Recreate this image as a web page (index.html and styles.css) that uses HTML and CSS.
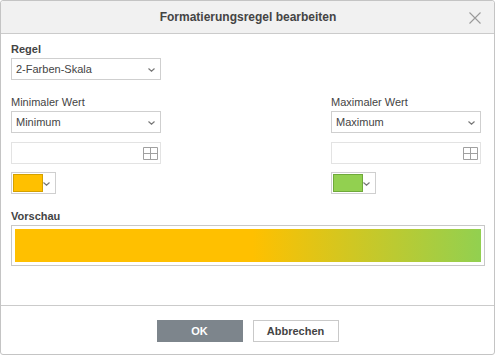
FILE: index.html
```html
<!DOCTYPE html>
<html lang="de">
<head>
<meta charset="utf-8">
<title>Formatierungsregel bearbeiten</title>
<link rel="stylesheet" href="styles.css">
</head>
<body>
<div class="dialog">
  <div class="header">
    <span class="title">Formatierungsregel bearbeiten</span>
    <svg class="close" width="12" height="12" viewBox="0 0 12 12"><path d="M0.5 0.5L11.5 11.5M11.5 0.5L0.5 11.5" stroke="#9a9a9a" stroke-width="1.1" fill="none"/></svg>
  </div>
  <div class="body">
    <div class="label bold">Regel</div>
    <div class="select"><span>2-Farben-Skala</span><svg class="chev" width="7" height="4" viewBox="0 0 7 4"><path d="M0.5 0.5L3.5 3.2L6.5 0.5" stroke="#777" stroke-width="1.2" fill="none"/></svg></div>
    <div class="cols">
      <div class="col">
        <div class="label">Minimaler Wert</div>
        <div class="select"><span>Minimum</span><svg class="chev" width="7" height="4" viewBox="0 0 7 4"><path d="M0.5 0.5L3.5 3.2L6.5 0.5" stroke="#777" stroke-width="1.2" fill="none"/></svg></div>
        <div class="input"><svg class="grid" width="15" height="13" viewBox="0 0 15 13"><path d="M0.5 0.5H14.5V12.5H0.5Z M7.5 0.5V12.5 M0.5 6.5H14.5" stroke="#a0a0a0" stroke-width="1" fill="none"/></svg></div>
        <div class="colorbtn"><span class="swatch orange"></span><svg class="chev" width="7" height="4" viewBox="0 0 7 4"><path d="M0.5 0.5L3.5 3.2L6.5 0.5" stroke="#777" stroke-width="1.2" fill="none"/></svg></div>
      </div>
      <div class="col">
        <div class="label">Maximaler Wert</div>
        <div class="select"><span>Maximum</span><svg class="chev" width="7" height="4" viewBox="0 0 7 4"><path d="M0.5 0.5L3.5 3.2L6.5 0.5" stroke="#777" stroke-width="1.2" fill="none"/></svg></div>
        <div class="input"><svg class="grid" width="15" height="13" viewBox="0 0 15 13"><path d="M0.5 0.5H14.5V12.5H0.5Z M7.5 0.5V12.5 M0.5 6.5H14.5" stroke="#a0a0a0" stroke-width="1" fill="none"/></svg></div>
        <div class="colorbtn"><span class="swatch green"></span><svg class="chev" width="7" height="4" viewBox="0 0 7 4"><path d="M0.5 0.5L3.5 3.2L6.5 0.5" stroke="#777" stroke-width="1.2" fill="none"/></svg></div>
      </div>
    </div>
    <div class="label bold preview-label">Vorschau</div>
    <div class="preview"><div class="bar"></div></div>
  </div>
  <div class="footer">
    <button class="btn primary">OK</button>
    <button class="btn">Abbrechen</button>
  </div>
</div>
</body>
</html>
```

FILE: styles.css
```css
* { box-sizing: border-box; }
html, body { margin: 0; padding: 0; background: #fff; }
body {
  font-family: "Liberation Sans", Arial, sans-serif;
  font-size: 11px;
  color: #444;
}
.dialog {
  width: 495px;
  height: 355px;
  border: 1px solid #c4c4c4;
  border-radius: 3px;
  display: flex;
  flex-direction: column;
  background: #fff;
}
.header {
  height: 33px;
  flex: none;
  background: #f1f1f1;
  border-bottom: 1px solid #cbcbcb;
  display: flex;
  align-items: center;
  justify-content: center;
  position: relative;
  border-radius: 3px 3px 0 0;
}
.title {
  font-size: 12px;
  font-weight: bold;
  color: #444;
  margin-left: 1px;
}
.close {
  position: absolute;
  right: 13px;
  top: 11px;
}
.body {
  flex: 1;
  padding: 8px 10px 0 10px;
}
.label {
  height: 14px;
  line-height: 14px;
  margin-bottom: 2px;
}
.bold { font-weight: bold; }
.select {
  width: 150px;
  height: 22px;
  border: 1px solid #cfcfcf;
  display: flex;
  align-items: center;
  justify-content: space-between;
  padding: 0 5px 0 4px;
  color: #444;
}
.chev { flex: none; margin-top: 1px; }
.cols {
  display: grid;
  grid-template-columns: 150px 150px;
  column-gap: 170px;
  margin-top: 15px;
}
.input {
  margin-top: 9px;
  height: 22px;
  border: 1px solid #e3e3e3;
  display: flex;
  align-items: center;
  justify-content: flex-end;
  padding-right: 2px;
}
.colorbtn {
  margin-top: 8px;
  width: 45px;
  height: 22px;
  border: 1px solid #cfcfcf;
  display: flex;
  align-items: center;
  padding: 0 5px 0 1px;
  justify-content: space-between;
}
.swatch {
  width: 31px;
  height: 18px;
}
.orange { background: #ffc000; border: 1px solid #d4a100; }
.green { background: #92d050; border: 1px solid #6fa93a; }
.preview-label { margin-top: 15px; }
.preview {
  height: 41px;
  border: 1px solid #c8c8c8;
  padding: 3px;
  width: 474px;
}
.bar {
  height: 100%;
  background: linear-gradient(to right, #ffc000 0%, #ffc000 51%, #92d050 100%);
}
.footer {
  flex: none;
  height: 49px;
  border-top: 1px solid #cbcbcb;
  display: flex;
  justify-content: center;
  align-items: flex-start;
  gap: 10px;
  padding-top: 14px;
}
.btn {
  width: 86px;
  height: 22px;
  border: 1px solid #c9c9c9;
  background: #fff;
  font-family: "Liberation Sans", Arial, sans-serif;
  font-size: 11px;
  font-weight: bold;
  color: #444;
  padding: 0;
  margin: 0;
}
.btn.primary {
  background: #7d858c;
  border-color: #7d858c;
  color: #fff;
}
```
